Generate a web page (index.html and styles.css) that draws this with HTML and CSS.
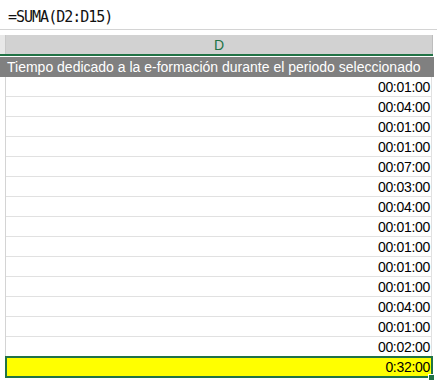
FILE: index.html
```html
<!DOCTYPE html>
<html lang="es">
<head>
<meta charset="utf-8">
<link rel="stylesheet" href="styles.css">
</head>
<body>
<div class="formula-bar"><span class="formula">=SUMA(D2:D15)</span></div>
<div class="sheet">
  <div class="col-header">
    <div class="corner"></div>
    <div class="col-d">D</div>
  </div>
  <div class="title-row">Tiempo dedicado a la e-formación durante el periodo seleccionado</div>
  <div class="row"><div class="rh"></div><div class="cell">00:01:00</div></div>
  <div class="row"><div class="rh"></div><div class="cell">00:04:00</div></div>
  <div class="row"><div class="rh"></div><div class="cell">00:01:00</div></div>
  <div class="row"><div class="rh"></div><div class="cell">00:01:00</div></div>
  <div class="row"><div class="rh"></div><div class="cell">00:07:00</div></div>
  <div class="row"><div class="rh"></div><div class="cell">00:03:00</div></div>
  <div class="row"><div class="rh"></div><div class="cell">00:04:00</div></div>
  <div class="row"><div class="rh"></div><div class="cell">00:01:00</div></div>
  <div class="row"><div class="rh"></div><div class="cell">00:01:00</div></div>
  <div class="row"><div class="rh"></div><div class="cell">00:01:00</div></div>
  <div class="row"><div class="rh"></div><div class="cell">00:01:00</div></div>
  <div class="row"><div class="rh"></div><div class="cell">00:04:00</div></div>
  <div class="row"><div class="rh"></div><div class="cell">00:01:00</div></div>
  <div class="row"><div class="rh"></div><div class="cell">00:02:00</div></div>
  <div class="row"><div class="rh"></div><div class="cell total">0:32:00<span class="handle"></span></div></div>
</div>
</body>
</html>
```
FILE: styles.css
```css
html, body {
  margin: 0;
  padding: 0;
  background: #ffffff;
}
body {
  width: 437px;
  height: 380px;
  overflow: hidden;
  font-family: "Liberation Sans", Arial, sans-serif;
  color: #000;
}
.formula-bar {
  height: 29px;
  border-bottom: 1px solid #d4d4d4;
  box-sizing: content-box;
  display: flex;
  align-items: center;
  padding-left: 8px;
}
.formula {
  font-family: "DejaVu Sans Mono", monospace;
  font-size: 15px;
  letter-spacing: -1px;
  color: #111;
  padding-top: 4px;
}
.sheet {
  padding-top: 5px;
}
.col-header {
  display: flex;
  height: 19px;
  border-bottom: 2px solid #217346;
  width: 433px;
}
.corner {
  width: 5px;
  background: #e8e8e8;
  border-right: 1px solid #c8c8c8;
}
.col-d {
  width: 426px;
  background: #d2d2d2;
  border-right: 1px solid #bdbdbd;
  text-align: center;
  font-size: 14px;
  line-height: 21px;
  color: #217346;
}
.title-row {
  width: 434px;
  height: 20px;
  margin-top: 1px;
  background: #808080;
  color: #ffffff;
  font-size: 14px;
  line-height: 20px;
  padding-left: 7px;
  box-sizing: border-box;
  white-space: nowrap;
}
.row {
  display: flex;
  height: 20px;
}
.rh {
  width: 5px;
  border-right: 1px solid #d4d4d4;
}
.cell {
  width: 426px;
  box-sizing: border-box;
  border-right: 1px solid #e1e1e1;
  border-bottom: 1px solid #e1e1e1;
  text-align: right;
  font-size: 14px;
  line-height: 20px;
  padding-right: 1px;
  letter-spacing: -0.3px;
  position: relative;
}
.cell.total {
  background: #ffff00;
  outline: 2px solid #217346;
  outline-offset: -1px;
  border: none;
  padding-right: 2px;
}
.handle {
  position: absolute;
  right: -3px;
  bottom: -4px;
  width: 5px;
  height: 5px;
  background: #217346;
  border: 1px solid #fff;
}
```
